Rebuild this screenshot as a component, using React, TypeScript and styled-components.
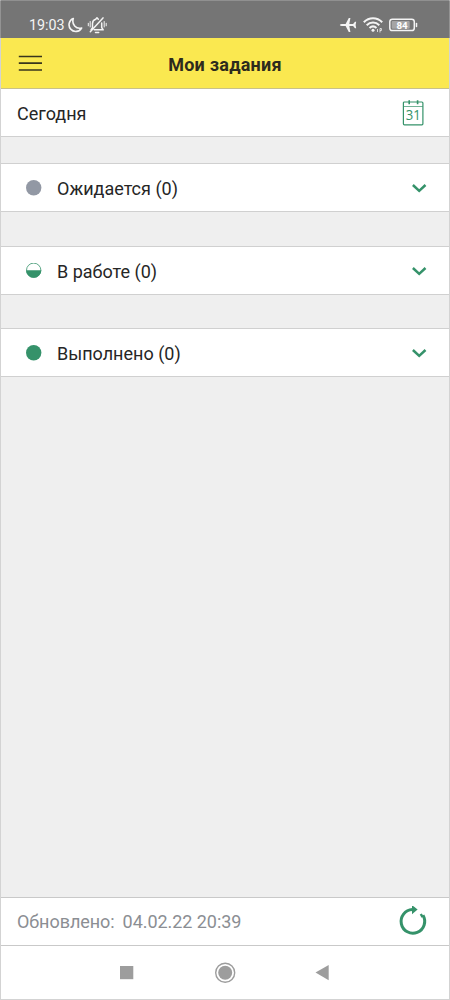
import React from "react";
import styled, { createGlobalStyle } from "styled-components";

const GREEN = "#35926a";

const GlobalStyle = createGlobalStyle`
  * { box-sizing: border-box; }
  body { margin: 0; font-family: Roboto, "Noto Sans", sans-serif; color: #262626; }
  svg { display: block; flex: none; }
`;

const Screen = styled.div`
  display: flex;
  flex-direction: column;
  width: 450px;
  height: 1000px;
  background: #efefef;
  border: 1px solid #d3d3d3;
  border-top-color: #909090;
`;

const StatusBar = styled.header`
  display: flex;
  align-items: center;
  justify-content: space-between;
  height: 37px;
  margin: 0 -1px;
  padding: 11px 31px 0 28px;
  background: #757575;
  border: solid #939393;
  border-width: 0 1px;
  color: #f4f4f4;
`;

const StatusGroup = styled.div<{ $gap: number }>`
  display: flex;
  align-items: center;
  gap: ${(p) => p.$gap}px;
`;

const Clock = styled.span`
  font-size: 14.3px;
  line-height: 20px;
  width: 35px;
  white-space: nowrap;
`;

const TitleBar = styled.div`
  display: grid;
  grid-template-columns: 24px 1fr 24px;
  align-items: center;
  height: 51px;
  padding: 0 17px;
  background: #fae850;
  border-bottom: 1px solid #c8c18a;
`;

const Title = styled.h1`
  margin: 3px 0 0;
  text-align: center;
  font-size: 18px;
  letter-spacing: 0.25px;
  font-weight: 700;
  line-height: 24px;
  color: #2d2b1d;
`;

const DateRow = styled.div`
  display: flex;
  align-items: center;
  justify-content: space-between;
  height: 48px;
  padding: 0 25px 0 16px;
  background: #fff;
  border-bottom: 1px solid #d0d0d0;
`;

const Label = styled.span`
  font-size: 18px;
  line-height: 24px;
  white-space: nowrap;
  padding-top: 2px;
`;

const Sections = styled.main`
  display: flex;
  flex-direction: column;
  flex: 1;
  padding-top: 26px;
`;

const Section = styled.section<{ $after: number }>`
  display: grid;
  grid-template-columns: 16px 1fr 16px;
  column-gap: 15px;
  align-items: center;
  height: 49px;
  flex: none;
  margin-bottom: ${(p) => p.$after}px;
  padding: 0 22px 0 25px;
  background: #fff;
  border: solid #d0d0d0;
  border-width: 1px 0;
`;

const Footer = styled.footer`
  display: flex;
  align-items: center;
  justify-content: space-between;
  height: 49px;
  padding: 0 20px 0 16px;
  background: #fff;
  border: solid #c9c9c9;
  border-width: 1px 0;
`;

const Updated = styled.div`
  display: flex;
  gap: 8px;
  padding-bottom: 2px;
  letter-spacing: -0.05px;
  color: #8b8e93;
`;

const NavBar = styled.nav`
  display: flex;
  align-items: center;
  height: 53px;
  padding-left: 118px;
  background: #fff;
`;

type Status = "waiting" | "progress" | "done";

const StatusDot = ({ status }: { status: Status }) => (
  <svg width="16" height="16" viewBox="0 0 16 16">
    {status === "progress" ? (
      <>
        <circle cx="7.7" cy="7.3" r="7.2" fill="#fff" stroke={GREEN} strokeWidth=".8" />
        <path d="M.1 7.2h15.200a7.600 7.600 0 0 1-15.200 0Z" fill={GREEN} />
      </>
    ) : (
      <circle cx="7.7" cy="7.7" r="7.7" fill={status === "done" ? GREEN : "#9298a4"} />
    )}
  </svg>
);

const Chevron = () => (
  <svg width="16" height="16" viewBox="0 0 16 16">
    <path d="m1.900 5 6.300 5.900L14.500 5" fill="none" stroke={GREEN} strokeWidth="2.500" />
  </svg>
);

const sections: { status: Status; name: string; after: number }[] = [
  { status: "waiting", name: "Ожидается (0)", after: 34 },
  { status: "progress", name: "В работе (0)", after: 33 },
  { status: "done", name: "Выполнено (0)", after: 0 },
];

export default function App() {
  return (
    <>
      <GlobalStyle />
      <Screen>
        <StatusBar>
          <StatusGroup $gap={4}>
            <Clock>19:03</Clock>
            <svg width="15" height="16" viewBox="0 0 15 16" fill="none" stroke="#f4f4f4" strokeWidth="1.6" strokeLinejoin="round">
              <path d="M5.300 1.500A6.700 6.700 0 1 0 13.600 11C8 12.400 3.400 7.200 5.300 1.500Z" />
            </svg>
            <svg width="20" height="18" viewBox="0 0 20 18" fill="none" stroke="#f4f4f4" strokeWidth="1.500" strokeLinecap="round" strokeLinejoin="round">
              <path d="M5.500 11V7.500a4.600 4.600 0 0 1 3.200-4.300L10 1.700l1.300 1.500M14.700 7v4.500l1.500 2.300H7.300M8.500 16.500h3.200M3.300 15.800 16 1.900M4.100 13.700l1.400-2" />
              <path d="M1.300 7.300v2.500M3.200 5.500v5.500M17.200 5.500v5.500M19.200 7.300v2.500" strokeWidth="1" />
            </svg>
          </StatusGroup>
          <StatusGroup $gap={6}>
            <svg width="18" height="16" viewBox="0 0 18 16" fill="#f4f4f4">
              <path d="M.8 8Q1.200 6.900 3 6.900h3.600L9.800.9h1.600L10.300 6.900h3.800L16 4.700h1.200L16.600 8l.6 3.300H16l-1.900-2.200h-3.800l1.100 6H9.800L6.600 9.100H3Q1.200 9.100.8 8Z" />
            </svg>
            <svg width="20" height="16" viewBox="0 0 20 16" fill="none" stroke="#f4f4f4" strokeWidth="2">
              <path d="M.8 5.300C6-.1 14-.1 19.200 5.300M3.700 8.300c3.600-3.600 9-3.600 12.600 0M6.500 11c2.100-2 4.900-2 7 0" />
              <circle cx="10" cy="13.300" r="1.500" fill="#f4f4f4" stroke="none" />
              <path d="M14.500 12v3M17 15.500v-4h1.400v2H17" strokeWidth=".8" />
            </svg>
            <svg width="29" height="14" viewBox="0 0 29 14">
              <rect x=".8" y="1.200" width="24.500" height="11.400" rx="2.600" fill="none" stroke="#f4f4f4" strokeWidth="1.500" />
              <rect x="2.700" y="3" width="18" height="7.800" rx="1" fill="#a5a5a5" />
              <path d="M27.500 5.500v3" stroke="#f4f4f4" strokeWidth="1.500" strokeLinecap="round" />
              <text x="13" y="10.500" textAnchor="middle" fontFamily="Roboto, sans-serif" fontWeight="700" fontSize="9.800" fill="#fff">84</text>
            </svg>
          </StatusGroup>
        </StatusBar>

        <TitleBar>
          <svg width="24" height="18" viewBox="0 0 24 18">
            <path d="M.8 2.500H24M.8 9.200H24M.8 16H24" stroke="#38341c" strokeWidth="1.700" />
          </svg>
          <Title>Мои задания</Title>
        </TitleBar>

        <DateRow>
          <Label>Сегодня</Label>
          <svg width="22" height="26" viewBox="0 0 22 26">
            <rect x="1.400" y="2" width="19.500" height="22.800" rx="1" fill="none" stroke={GREEN} strokeWidth="1.200" />
            <path d="M1.400 6.500h19.500" stroke={GREEN} strokeWidth=".7" />
            <path d="M7.200.2v4M15.600.2v4" stroke={GREEN} strokeWidth="1.600" />
            <text x="11.200" y="20.200" textAnchor="middle" fontFamily='"Open Sans", sans-serif' fontSize="14" textLength="15" lengthAdjust="spacingAndGlyphs" fill={GREEN}>31</text>
          </svg>
        </DateRow>

        <Sections>
          {sections.map((s) => (
            <Section key={s.status} $after={s.after}>
              <StatusDot status={s.status} />
              <Label>{s.name}</Label>
              <Chevron />
            </Section>
          ))}
        </Sections>

        <Footer>
          <Updated>
            <Label>Обновлено:</Label>
            <Label>04.02.22 20:39</Label>
          </Updated>
          <svg width="32" height="32" viewBox="0 0 32 32">
            <path d="M15.400 3.600A11.800 11.800 0 1 0 26 9.300" fill="none" stroke={GREEN} strokeWidth="3" />
            <path d="M15-.9 20.600 3.500 15 8.200Z" fill={GREEN} />
            <path d="m23.800 8 1.800 3.200" stroke={GREEN} strokeWidth="2.400" />
          </svg>
        </Footer>

        <NavBar>
          <svg width="212" height="22" viewBox="0 0 212 22" fill="#9d9d9d">
            <path d="M1 4h13.300v13.200H1Z" />
            <circle cx="106.200" cy="10.800" r="9.500" fill="none" stroke="#9d9d9d" strokeWidth="1.400" />
            <circle cx="106.200" cy="10.800" r="7" />
            <path d="M196.500 10.600 209.700 3v15.200Z" />
          </svg>
        </NavBar>
      </Screen>
    </>
  );
}
